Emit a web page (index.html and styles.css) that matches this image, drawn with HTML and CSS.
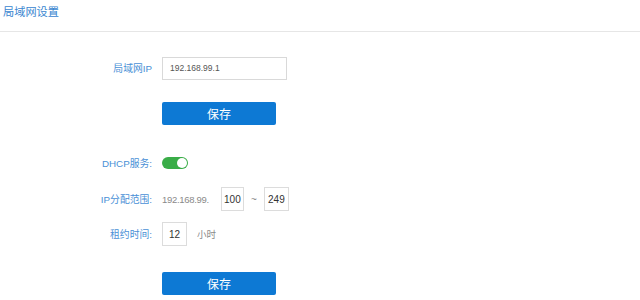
FILE: index.html
```html
<!DOCTYPE html>
<html lang="zh">
<head>
<meta charset="utf-8">
<title>局域网设置</title>
<link rel="stylesheet" href="styles.css">
</head>
<body>
<div class="header"><span class="title">局域网设置</span></div>
<div class="form">
  <div class="row row-ip">
    <label class="label">局域网IP</label>
    <input class="text-input" type="text" value="192.168.99.1">
  </div>
  <div class="row row-btn1">
    <span class="label"></span>
    <button class="btn">保存</button>
  </div>
  <div class="row row-dhcp">
    <label class="label">DHCP服务:</label>
    <span class="toggle"><span class="knob"></span></span>
  </div>
  <div class="row row-range">
    <label class="label">IP分配范围:</label>
    <span class="value">192.168.99.</span>
    <input class="box box-a" type="text" value="100">
    <span class="tilde">~</span>
    <input class="box box-b" type="text" value="249">
  </div>
  <div class="row row-lease">
    <label class="label">租约时间:</label>
    <input class="box box-c" type="text" value="12">
    <span class="unit">小时</span>
  </div>
  <div class="row row-btn2">
    <span class="label"></span>
    <button class="btn">保存</button>
  </div>
</div>
</body>
</html>
```
FILE: styles.css
```css
html, body {
  margin: 0;
  padding: 0;
  background: #fff;
  font-family: "Liberation Sans", "Noto Sans CJK SC", sans-serif;
  width: 640px;
  height: 300px;
  overflow: hidden;
}
.header {
  height: 31px;
  border-bottom: 1px solid #e6e6e6;
  padding-left: 3px;
}
.title {
  display: block;
  padding-top: 4px;
  font-size: 11.2px;
  line-height: 16px;
  color: #3a86d0;
}
.form {
  display: flex;
  flex-direction: column;
}
.row {
  display: flex;
  align-items: center;
  height: 24px;
}
.label {
  width: 152px;
  flex: none;
  text-align: right;
  padding-right: 10px;
  font-size: 9.8px;
  color: #4a90d6;
}
.row-ip { margin-top: 24px; }
.row-btn1 { margin-top: 21px; }
.row-dhcp { margin-top: 26px; }
.row-range { margin-top: 12px; }
.row-lease { margin-top: 11px; }
.row-btn2 { margin-top: 25px; }

.text-input {
  width: 125px;
  height: 23px;
  box-sizing: border-box;
  border: 1px solid #d9d9d9;
  padding: 0 7px;
  font-family: inherit;
  font-size: 8.5px;
  color: #555;
  outline: none;
}
.btn {
  width: 114px;
  height: 23px;
  border: none;
  border-radius: 2px;
  background: #0d79d4;
  color: #fff;
  font-family: inherit;
  font-size: 12px;
  padding: 0;
}
.toggle {
  position: relative;
  width: 26px;
  height: 12px;
  border-radius: 6px;
  background: #3aad48;
}
.knob {
  position: absolute;
  right: 1px;
  top: 1px;
  width: 10px;
  height: 10px;
  border-radius: 50%;
  background: #fff;
}
.value, .unit {
  font-size: 9.5px;
  color: #8a8a8a;
}
.value {
  margin-right: 12px;
  letter-spacing: -0.3px;
}
.box {
  height: 24px;
  box-sizing: border-box;
  border: 1px solid #dcdcdc;
  padding: 0;
  text-align: center;
  font-family: inherit;
  font-size: 10px;
  color: #333;
  outline: none;
}
.box-a { width: 23px; }
.box-b { width: 25px; }
.box-c { width: 25px; }
.tilde {
  font-size: 10px;
  color: #888;
  width: 20px;
  text-align: center;
}
.unit {
  margin-left: 10px;
  font-size: 9.5px;
}
```
